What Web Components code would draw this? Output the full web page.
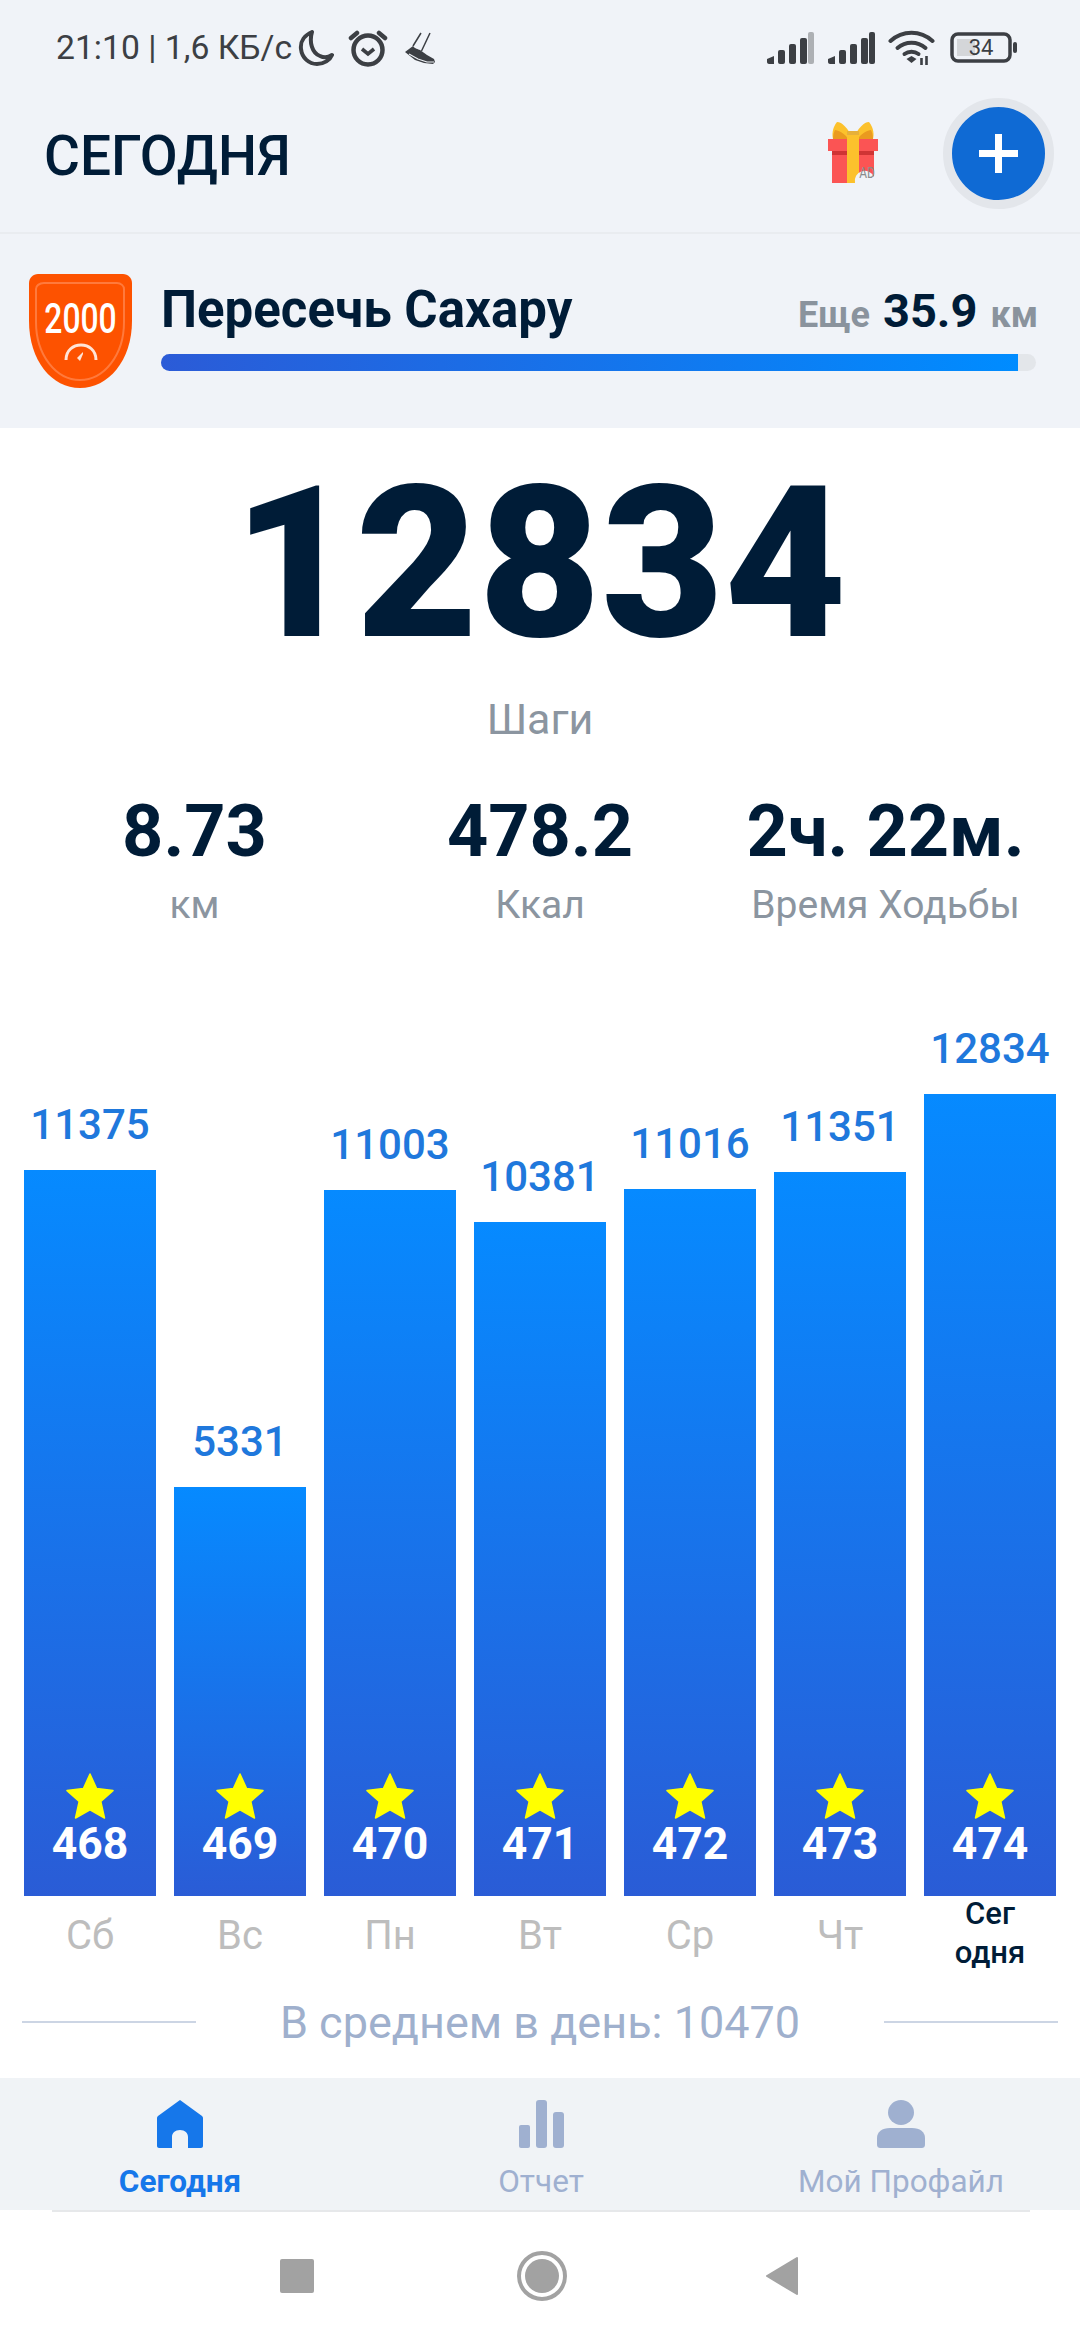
<!doctype html>
<html lang="ru"><head><meta charset="utf-8">
<style>
html,body{margin:0;padding:0;background:#fff}
body{width:1080px;height:2340px;overflow:hidden;font-family:Roboto,"Noto Sans",sans-serif;display:flex;flex-direction:column}
</style></head><body>
<status-bar></status-bar>
<app-header></app-header>
<challenge-card></challenge-card>
<step-total></step-total>
<step-stats>
  <stat-item value="8.73" label="км"></stat-item>
  <stat-item value="478.2" label="Ккал"></stat-item>
  <stat-item value="2ч. 22м." label="Время Ходьбы"></stat-item>
</step-stats>
<week-chart>
  <day-bar value="11375" h="726" n="468" day="Сб"></day-bar>
  <day-bar value="5331" h="409" n="469" day="Вс"></day-bar>
  <day-bar value="11003" h="706" n="470" day="Пн"></day-bar>
  <day-bar value="10381" h="674" n="471" day="Вт"></day-bar>
  <day-bar value="11016" h="707" n="472" day="Ср"></day-bar>
  <day-bar value="11351" h="724" n="473" day="Чт"></day-bar>
  <day-bar value="12834" h="802" n="474" day="Сег одня" today></day-bar>
</week-chart>
<average-line>В среднем в день: 10470</average-line>
<tab-bar></tab-bar>
<system-nav></system-nav>
<script>
function def(name, css, html, render){
  customElements.define(name, class extends HTMLElement{
    connectedCallback(){
      if(this.shadowRoot) return;
      const r=this.attachShadow({mode:'open'});
      const a=k=>this.getAttribute(k);
      r.innerHTML='<style>'+css+'</style>'+(render?render(a,this):html);
    }
  });
}
def('status-bar',`
:host{display:flex;align-items:center;height:96px;padding:0 62px 0 56px;background:#f0f3f8;color:#3c3f44;flex:none;box-sizing:border-box}
.t{font-size:33.700px;white-space:nowrap;line-height:96px}
svg{display:block;flex:none}
.sp{flex:1}
`,`<span class="t">21:10 | 1,6 КБ/с</span>
<svg style="margin-left:6px" width="36" height="36" viewBox="0 0 36 36"><path d="M14 2C7 5 2 11 3 19c1 9 8 15 16 15 7 0 13-4 15-9-3 2-8 3-12 1-8-3-11-14-8-24z" fill="none" stroke="#3c3f44" stroke-width="4" stroke-linejoin="round"/></svg>
<svg style="margin-left:14px" width="40" height="38" viewBox="0 0 40 38"><circle cx="20" cy="21" r="14.500" fill="none" stroke="#3c3f44" stroke-width="4.500"/><path d="M14 20l6 5 6-5" fill="none" stroke="#3c3f44" stroke-width="3.600"/><path d="M3 9l6-5M37 9l-6-5" stroke="#3c3f44" stroke-width="4.500" stroke-linecap="round"/></svg>
<svg style="margin-left:17px" width="31" height="33" viewBox="0 0 31 33"><path d="M16 1L8 14M25 1l-8.500 18" fill="none" stroke="#3c3f44" stroke-width="1.500"/><path d="M0 20l8-6c2 3 5 3 7 4l7 5 7 4 1 3-2 2-9-1-9-3z" fill="#3c3f44"/><path d="M4 22l9 5 9 3h7" fill="none" stroke="#f0f3f8" stroke-width="1.100"/></svg>
<span class="sp"></span>
<svg width="48" height="32" viewBox="0 0 48 32"><g fill="#3c3f44"><path d="M0 27l7-3v8H2c-1 0-2-1-2-2z"/><rect x="11" y="18" width="7" height="14" rx="2"/><rect x="22" y="12" width="7" height="20" rx="2"/><rect x="33" y="6" width="7" height="26" rx="2"/></g><rect x="41" y="0" width="6" height="32" rx="2" fill="#adb0b4"/></svg>
<svg style="margin-left:13px" width="48" height="32" viewBox="0 0 48 32"><g fill="#3c3f44"><path d="M0 27l7-3v8H2c-1 0-2-1-2-2z"/><rect x="11" y="18" width="7" height="14" rx="2"/><rect x="22" y="12" width="7" height="20" rx="2"/><rect x="33" y="6" width="7" height="26" rx="2"/><rect x="41" y="0" width="6" height="32" rx="2"/></g></svg>
<svg style="margin-left:12px" width="47" height="36" viewBox="0 0 46 36"><g fill="none" stroke="#3c3f44" stroke-width="4" stroke-linecap="round"><path d="M2 11c12-11 30-11 42 0"/><path d="M9 18c8-7 20-7 28 0"/><path d="M16 24c4-3 10-3 14 0"/></g><path d="M18 29l5-3 5 3-5 4z" fill="#3c3f44"/><path d="M33 28v7M38 26v9" stroke="#3c3f44" stroke-width="2.600"/></svg>
<div class="bat" style="margin-left:15px;width:68px;height:32px;position:relative;flex:none"><svg width="68" height="32" viewBox="0 0 68 32"><rect x="2" y="2" width="58" height="27" rx="6" fill="none" stroke="#3c3f44" stroke-width="3.500"/><rect x="7" y="7" width="18" height="17" fill="#d4d6d9"/><rect x="63" y="10" width="4" height="11" rx="2" fill="#3c3f44"/></svg><span style="position:absolute;left:0;width:62px;top:2px;text-align:center;font-size:22px;line-height:27px">34</span></div>
`);
def('app-header',`
:host{display:flex;align-items:center;height:112px;padding:0 26px 24px 44px;background:#f0f3f8;border-bottom:2px solid #e9ecf0;flex:none}
h1{margin:8px 0 0;font-size:55px;font-weight:500;color:#001c37;flex:1;line-height:70px}
.gift{position:relative;width:50px;height:61px;margin-right:65px;flex:none}
.gift svg{display:block}
.gift span{position:absolute;left:29px;bottom:0;width:20px;text-align:center;font-size:15px;line-height:19px;color:#8b8b8b;transform:scaleX(.8)}
.add{width:93px;height:93px;border-radius:50%;background:#0f6ad4;border:9px solid #e3e6eb;display:flex;align-items:center;justify-content:center;margin-top:2px}
`,`<h1>СЕГОДНЯ</h1>
<div class="gift"><svg width="50" height="61" viewBox="0 0 50 61"><path d="M25 17C20 6 14 0 9 0 4 6 4 13 5 17z" fill="#fcc12c"/><path d="M25 17C30 6 36 0 41 0c5 6 5 13 4 17z" fill="#fcc12c"/><path d="M5 17c0-4 1-7 2-9 6 1 11 5 13 9zM45 17c0-4-1-7-2-9-6 1-11 5-13 9z" fill="#ea9a1f"/><rect x="19" y="9" width="12" height="9" fill="#e6b03a"/><rect x="4" y="28" width="42" height="33" fill="#fb5454"/><rect x="0" y="17" width="50" height="12" fill="#fb5454"/><rect x="4" y="29" width="42" height="4" fill="#cf3434"/><rect x="19" y="13" width="12" height="48" fill="#fcc12c"/><path d="M27 61a10 10 0 0 1 19-6v6z" fill="#f0f3f8"/></svg><span>AD</span></div>
<div class="add"><svg width="39" height="39" viewBox="0 0 39 39"><path d="M19.500 0v39M0 19.500h39" stroke="#fff" stroke-width="7"/></svg></div>`);
def('challenge-card',`
:host{display:flex;height:194px;padding:39px 44px 0 28px;box-sizing:border-box;background:#f0f3f8;flex:none}
.badge{position:relative;width:105px;height:116px;flex:none;margin-right:28px}
.badge svg{display:block}
.badge span{position:absolute;left:0;right:0;top:20px;text-align:center;font-size:43px;line-height:50px;font-weight:500;color:#fff;transform:scaleX(.74)}
.main{flex:1;min-width:0;margin-top:5px}
.row{display:flex;justify-content:space-between;align-items:baseline;height:64px;line-height:64px}
b{font-size:51px;font-weight:700;color:#001c37;white-space:nowrap}
.more{font-size:36px;font-weight:700;color:#8a939d;white-space:nowrap;margin-right:-2px}
.more i{font-style:normal;font-size:47px;color:#001c37;margin:0 4px}
.track{height:17px;margin-top:12px;border-radius:9px;background:#e3e6ea;overflow:hidden}
.fill{height:100%;width:857px;background:linear-gradient(90deg,#2b5bd7,#008cff)}
`,`<div class="badge"><svg width="105" height="116" viewBox="0 0 105 116"><path d="M10 1h85c5 0 9 4 9 9v38c0 40-24 67-52 67S1 88 1 48V10c0-5 4-9 9-9z" fill="#fd5200"/><path d="M16 10h73c4 0 7 3 7 6v33c0 33-20 58-44 58S8 82 8 49V16c0-3 3-6 8-6z" fill="none" stroke="#ff7a3c" stroke-width="2"/><path d="M38 87c0-20 30-20 30 0" fill="none" stroke="#ffe5d8" stroke-width="3"/><path d="M49 85l6-6 0 2-3 7z" fill="#ffe5d8"/></svg><span>2000</span></div>
<div class="main"><div class="row"><b>Пересечь Сахару</b><span class="more">Еще <i>35.9</i> км</span></div><div class="track"><div class="fill"></div></div></div>`);
def('step-total',`
:host{display:block;height:365px;flex:none;text-align:center;color:#001c37}
.n{font-size:211px;font-weight:900;line-height:244px;height:244px;letter-spacing:.5px;padding-top:14px}
.l{font-size:43px;color:#8b95a0;line-height:48px;margin-top:9px}
`,`<div class="n">12834</div><div class="l">Шаги</div>`);
def('step-stats',`
:host{display:grid;grid-template-columns:389px 302px 389px;flex:none;height:207px}
`,`<slot></slot>`);
def('stat-item',`
:host{display:block;text-align:center}
.v{font-size:72px;font-weight:700;color:#001c37;line-height:78px;white-space:nowrap}
.l{font-size:39px;color:#8b95a0;line-height:42px;white-space:nowrap;margin-top:13px}
`,'',a=>`<div class="v">${a('value')}</div><div class="l">${a('label')}</div>`);
def('week-chart',`
:host{display:flex;align-items:flex-end;gap:18px;padding:0 24px;height:996px;flex:none;box-sizing:border-box}
`,`<slot></slot>`);
def('day-bar',`
:host{display:flex;flex-direction:column;width:132px;flex:none;height:100%;justify-content:flex-end;text-align:center}
.v{font-size:42px;font-weight:500;color:#1f78dc;line-height:46px;margin-bottom:22px}
.bar{background:linear-gradient(180deg,#068aff,#2a5cd6);display:flex;flex-direction:column;align-items:center;justify-content:flex-end;padding-bottom:29px;box-sizing:border-box}
.bar svg{display:block;margin-bottom:2px}
.n{font-size:44.500px;font-weight:700;color:#fff;line-height:46px}
.d{height:100px;box-sizing:border-box;font-size:40px;color:#bdbdbd;line-height:46px;padding-top:17px}
.d.today{font-size:31px;color:#001c37;font-weight:500;line-height:39px;padding:0 26px;margin-top:-2px;height:102px}
`,'',a=>`<div class="v">${a('value')}</div><div class="bar" style="height:${a('h')}px"><svg width="48" height="46" viewBox="0 0 48 46"><path d="M24 1l6.600 14.600 16.400 2-12.200 10.800L38.500 45 24 36.800 9.500 45l3.700-16.600L1 17.600l16.400-2z" fill="#ffff00" stroke="#ffff00" stroke-width="1.500" stroke-linejoin="round"/></svg><div class="n">${a('n')}</div></div><div class="d ${a('today')!==null?'today':''}">${a('day')}</div>`);
def('average-line',`
:host{display:flex;align-items:center;height:54px;margin-bottom:28px;padding:0 22px 2px;flex:none;box-sizing:border-box;color:#9fb0cd;font-size:45px}
i{flex:none;width:174px;height:2px;background:#ccd5e4}
span{flex:1;text-align:center;white-space:nowrap}
`,`<i></i><span><slot></slot></span><i></i>`);
def('tab-bar',`
:host{display:block;flex:none;background:#fff}
.g{display:grid;grid-template-columns:360px 362px 358px;height:132px;background:#f0f3f6;box-sizing:border-box;padding-top:22px}
a{display:flex;flex-direction:column;align-items:center;font-size:31.500px;color:#9fb0d0;white-space:nowrap}
a.on{color:#1677ea;font-weight:700}
a svg{display:block;height:48px}
a span{line-height:36px;margin-top:16px}
.rule{height:2px;margin:0 50px 0 52px;background:#e6e8ea}
`,`<div class="g"><a class="on"><svg width="46" height="48" viewBox="0 0 46 48"><path d="M23 0L45 16c.7.500 1 1.300 1 2V46c0 1-1 2-2 2H31V37c0-4-3-7-8-7s-8 3-8 7V48H2c-1 0-2-1-2-2V18c0-.7.3-1.500 1-2z" fill="#1677ea"/></svg><span>Сегодня</span></a>
<a><svg width="45" height="48" viewBox="0 0 45 48"><g fill="#9fb0d0"><rect x="0" y="25" width="11" height="23" rx="2"/><rect x="17" y="0" width="11" height="48" rx="3"/><rect x="34" y="12" width="11" height="36" rx="3"/></g></svg><span>Отчет</span></a>
<a><svg width="48" height="48" viewBox="0 0 48 48"><g fill="#9fb0d0"><ellipse cx="24" cy="12.500" rx="13" ry="12.500"/><path d="M13 28h22c8 0 13 4 13 10v6c0 3-1 4-4 4H4c-3 0-4-1-4-4v-6c0-6 5-10 13-10z"/></g></svg><span>Мой Профайл</span></a></div>
<div class="rule"></div>`);
def('system-nav',`
:host{display:flex;flex:1;align-items:center;padding:0 0 0 280px;background:#fff}
svg{display:block;flex:none}
`,`<svg width="34" height="34" viewBox="0 0 34 34"><rect width="34" height="34" rx="2" fill="#a2a2a2"/></svg>
<svg style="margin-left:203px" width="50" height="50" viewBox="0 0 50 50"><circle cx="25" cy="25" r="23" fill="none" stroke="#a2a2a2" stroke-width="4"/><circle cx="25" cy="25" r="17" fill="#a2a2a2"/></svg>
<svg style="margin-left:198px" width="34" height="38" viewBox="0 0 34 38"><path d="M32 1L2 19l30 18z" fill="#a2a2a2" stroke="#a2a2a2" stroke-width="2" stroke-linejoin="round"/></svg>`);
</script>
</body></html>
